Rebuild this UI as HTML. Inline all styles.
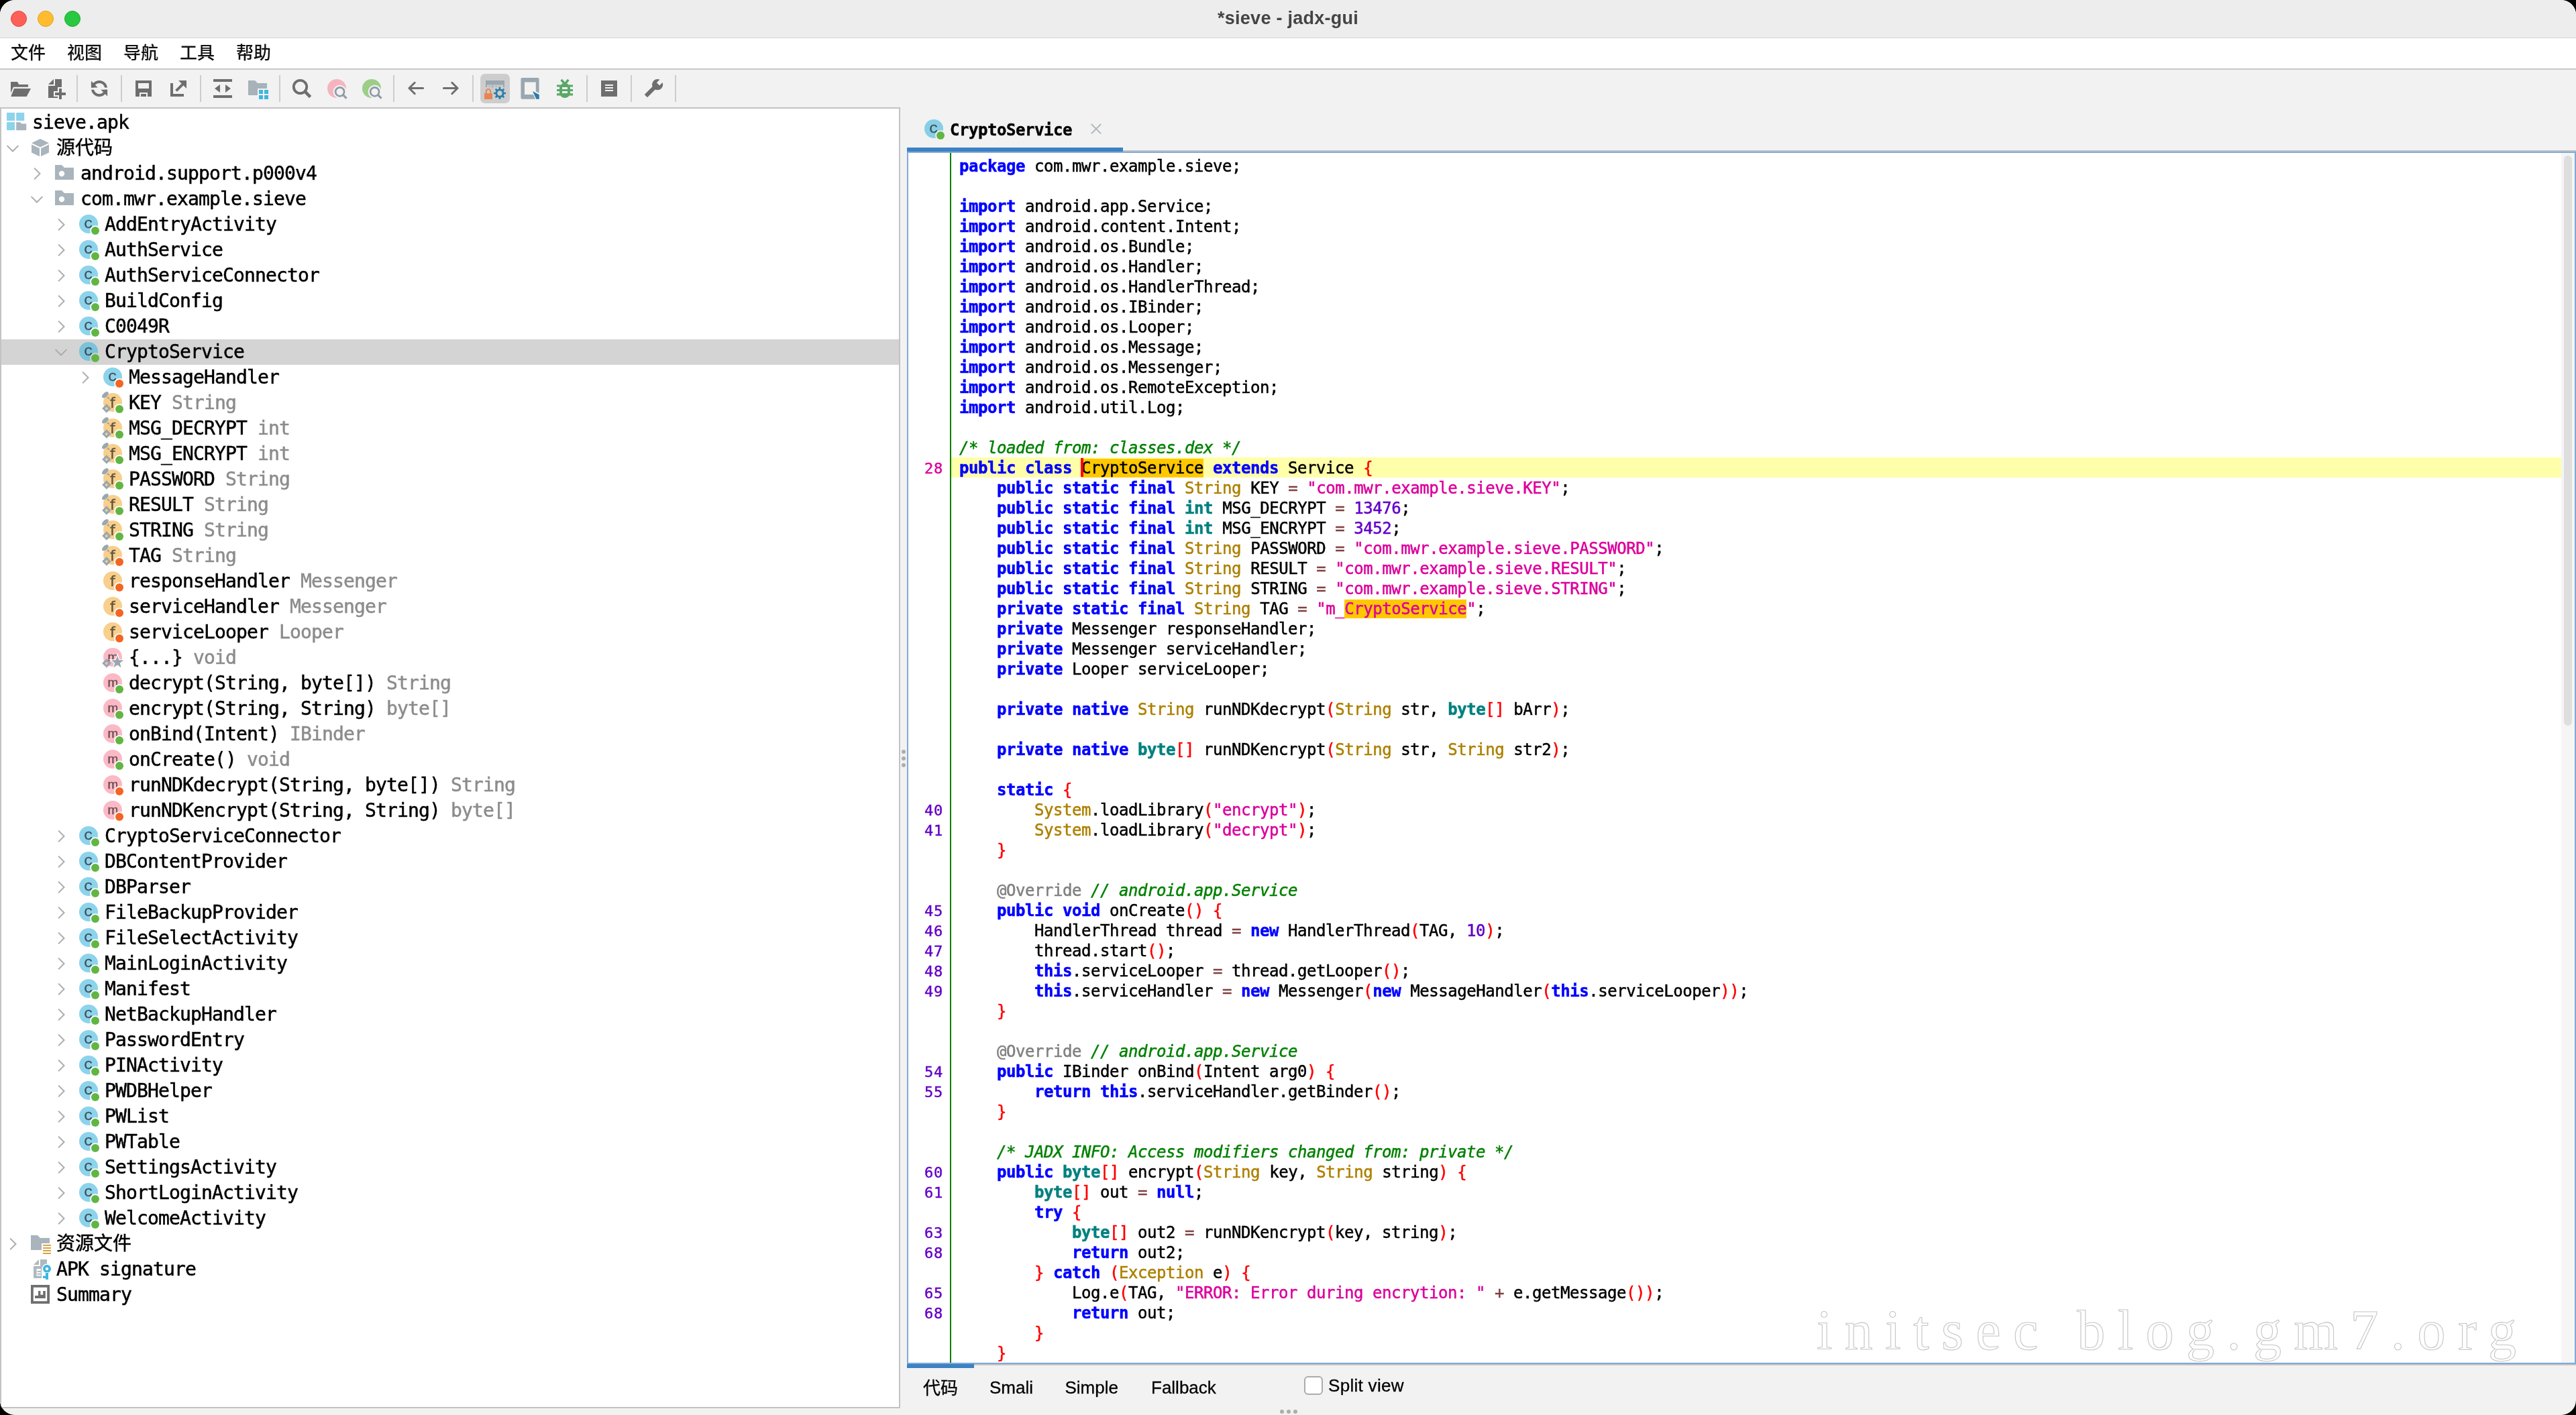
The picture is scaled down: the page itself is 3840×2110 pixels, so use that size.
<!DOCTYPE html>
<html lang="zh"><head><meta charset="utf-8"><title>*sieve - jadx-gui</title>
<style>
html,body{margin:0;padding:0;background:#000}
body{width:3840px;height:2110px;overflow:hidden;position:relative}
#win{position:absolute;left:0;top:0;width:3840px;height:2110px;background:#f2f2f2;border-radius:22px;overflow:hidden;will-change:transform}
#win div,#win pre{position:absolute;margin:0}
#title{left:0;top:0;width:3840px;height:56px;background:#ededed}
#titleline{left:0;top:55.5px;width:3840px;height:1.5px;background:#d2d2d2}
#ttext{left:0;top:0;width:3840px;height:56px;line-height:54px;text-align:center;font:bold 27px "Liberation Sans","Noto Sans CJK SC",sans-serif;line-height:55px;letter-spacing:.25px;color:#444}
.tl{top:16px;width:24px;height:24px;border-radius:50%;box-sizing:border-box}
#menu{left:0;top:57px;width:3840px;height:45px;background:#fff}
#menuline{left:0;top:102px;width:3840px;height:2px;background:#c8c8c8}
.mi{top:58px;height:44px;font:500 26px "Liberation Sans","Noto Sans CJK SC",sans-serif;line-height:43px;color:#111}
.sep{top:112px;width:2px;height:40px;background:#cdcdcd}
.tbsel{left:716px;top:110px;width:44px;height:44px;border-radius:7px;background:#cdcdcd}
#tree{left:0;top:160px;width:1342px;height:1940px;box-sizing:border-box;border:2px solid #c3c3c3;background:#fff}
.sel{left:2px;width:1338px;height:38px;background:#d4d4d4}
.tr{height:38px;font:28px "DejaVu Sans Mono","Liberation Mono","Noto Sans CJK SC",monospace;line-height:37px;letter-spacing:-0.857px;color:#000;white-space:pre;-webkit-text-stroke:.5px}
.tr.cj{font-size:28px;line-height:38px;letter-spacing:0}
.ty{color:#8c8c8c}
.dot{width:6px;height:6px;border-radius:50%;background:#adadad}
#tabicon{left:1376px;top:176px}
#tabtext{left:1416px;top:177px;height:34px;font:bold 24px "DejaVu Sans Mono","Liberation Mono","Noto Sans CJK SC",monospace;line-height:34px;letter-spacing:-0.449px;color:#000;white-space:pre;-webkit-text-stroke:.45px}
#tabul{left:1352px;top:220px;width:322px;height:6px;background:#3c81c4}
#tabline{left:1674px;top:224px;width:2166px;height:2px;background:#c4c4c4}
#editor{left:1352px;top:226px;width:2488px;height:1808px;box-sizing:border-box;border:2px solid #80aad6;background:#fff;overflow:hidden}
#hl{left:64px;top:454px;width:2400px;height:30px;background:#ffffaa}
#gline{left:62px;top:0;width:2px;height:1804px;background:#008000}
#gut{left:0;top:5.5px;width:52px;text-align:right;font:22px "DejaVu Sans Mono","Liberation Mono","Noto Sans CJK SC",monospace;line-height:30px;letter-spacing:0.755px;color:#6400c8;white-space:pre;-webkit-text-stroke:.45px}
#gut u{text-decoration:none;color:#dc009c}
#code{left:76px;top:5px;font:24px "DejaVu Sans Mono","Liberation Mono","Noto Sans CJK SC",monospace;line-height:30px;letter-spacing:-0.449px;color:#000;white-space:pre;tab-size:4;-webkit-text-stroke:.5px}
#code b{color:#0000ff}
#code b.d{color:#008080}
#code i{font-style:normal}
#code .f{color:#ad8000} #code .s{color:#dc009c} #code .n{color:#6400c8} #code .o{color:#804040} #code .p{color:#ff0000} #code .a{color:#808080}
#code em{color:#008000;font-style:italic}
#code mark{background:#ffc800;color:inherit;padding:0}
#caret{left:257px;top:455px;width:4px;height:28px;background:#ff0000}
#sbtrack{left:2464px;top:0;width:20px;height:1804px;background:#f5f5f5}
#sbthumb{left:2468px;top:4px;width:12px;height:850px;border-radius:6px;background:#dedede}
#wm{left:1354px;top:1709px;font:84px "Liberation Serif",serif;letter-spacing:18.5px;color:transparent;-webkit-text-stroke:1.1px #c6c6c6;white-space:pre;line-height:93px}
#btul{left:1352px;top:2034px;width:100px;height:6px;background:#3c81c4}
#btline{left:1452px;top:2034px;width:2388px;height:2px;background:#c4c4c4}
.bt{top:2046px;height:44px;font:26px "Liberation Sans","Noto Sans CJK SC",sans-serif;line-height:44px;color:#000;white-space:pre;-webkit-text-stroke:.3px}
#cb{left:1944px;top:2052px;width:28px;height:28px;box-sizing:border-box;border:2px solid #ababab;border-radius:6px;background:#fff}
</style></head>
<body>
<div id="win">
<div id="title"></div><div id="titleline"></div>
<div class="tl" style="left:16px;background:#fe5f57;border:1px solid #e2463f"></div>
<div class="tl" style="left:56px;background:#febc2e;border:1px solid #e0a028"></div>
<div class="tl" style="left:96px;background:#28c840;border:1px solid #1fab2f"></div>
<div id="ttext">*sieve - jadx-gui</div>
<div id="menu"></div><div id="menuline"></div>
<div class="mi" style="left:16px">文件</div><div class="mi" style="left:100px">视图</div><div class="mi" style="left:184px">导航</div><div class="mi" style="left:268px">工具</div><div class="mi" style="left:352px">帮助</div>
<div class="sep" style="left:114px"></div>
<div class="sep" style="left:180px"></div>
<div class="sep" style="left:298px"></div>
<div class="sep" style="left:416px"></div>
<div class="sep" style="left:586px"></div>
<div class="sep" style="left:704px"></div>
<div class="sep" style="left:874px"></div>
<div class="sep" style="left:940px"></div>
<div class="sep" style="left:1006px"></div>
<div class="tbsel"></div>
<svg style="position:absolute;left:14px;top:116px" width="32" height="32" viewBox="0 0 16 16" ><path d="M1,3 L6,3 L7.1,5 L14,5 L14,6.9 L3,6.9 L1,11.3 Z M3.5,8 L16,8 L12.85,14 L1.1,14 Z" fill="#6e6e6e"/></svg>
<svg style="position:absolute;left:66px;top:116px" width="32" height="32" viewBox="0 0 16 16" ><path d="M7,1 L3,5 L7,5 Z" fill="#6e6e6e"/><path d="M10,15 L3,15 L3,6 L8,6 L8,1 L13,1 L13,7 L10,7 L10,10 L7,10 L7,14 L10,14 Z" fill="#6e6e6e"/><path d="M11,8 h2 v3 h3 v2 h-3 v3 h-2 v-3 h-3 v-2 h3 z" fill="#6e6e6e"/></svg>
<svg style="position:absolute;left:132px;top:116px" width="32" height="32" viewBox="0 0 16 16" ><circle cx="8" cy="8.05" r="5.05" fill="none" stroke="#6e6e6e" stroke-width="1.95"/><rect x="0" y="7.3" width="16" height="1.55" fill="#f2f2f2"/><path d="M1.95,2.4 L1.95,7.3 L6.85,7.3 Z M14.05,13.7 L14.05,8.85 L9.15,8.85 Z" fill="#6e6e6e"/></svg>
<svg style="position:absolute;left:198px;top:116px" width="32" height="32" viewBox="0 0 16 16" ><path d="M2,2 H14 V14 H2 Z M4,4 V8 H12 V4 Z M5,11 V14 H11 V11 Z" fill="#6e6e6e" fill-rule="evenodd"/><rect x="6" y="12" width="4" height="2" fill="#6e6e6e"/></svg>
<svg style="position:absolute;left:250px;top:116px" width="32" height="32" viewBox="0 0 16 16" ><path d="M2,4 H4 V12 H12 V14 H2 Z" fill="#6e6e6e"/><path d="M8,2 H14 V8 Z" fill="#6e6e6e"/><path d="M6.1,9 L7,9.9 L12.4,4.5 L11.5,3.6 Z" fill="#6e6e6e" stroke="#6e6e6e" stroke-width=".7"/></svg>
<svg style="position:absolute;left:316px;top:116px" width="32" height="32" viewBox="0 0 16 16" ><path d="M1,1 H15 V3 H1 Z M1,13 H15 V15 H1 Z M2,8 L6,5 V11 Z M14,8 L10,5 V11 Z" fill="#6e6e6e"/></svg>
<svg style="position:absolute;left:368px;top:116px" width="32" height="32" viewBox="0 0 16 16" ><path d="M1,2 L6,2 L8,4 L15,4 L15,8 L8,8 L8,13 L1,13 Z" fill="#9aa7b0" fill-opacity=".85"/><path d="M9,9h3v3h-3z M13,9h3v3h-3z M9,13h3v3h-3z M13,13h3v3h-3z" fill="#40b6e0"/></svg>
<svg style="position:absolute;left:434px;top:116px" width="32" height="32" viewBox="0 0 16 16" ><circle cx="6.75" cy="6.75" r="4.85" fill="none" stroke="#6e6e6e" stroke-width="1.9"/><path d="M10.1,10.1 L14.3,14.3" stroke="#6e6e6e" stroke-width="2.3" fill="none"/></svg>
<svg style="position:absolute;left:486px;top:116px" width="32" height="32" viewBox="0 0 16 16" ><circle cx="8" cy="8" r="7" fill="#f98b9e" fill-opacity=".6"/><circle cx="10.3" cy="10.4" r="5" fill="#f2f2f2"/><path d="M12.4,12.5 L15.3,15.3" stroke="#f2f2f2" stroke-width="3.4" fill="none"/><circle cx="10.3" cy="10.4" r="3.25" fill="none" stroke="#8d9ba6" stroke-width="1.35"/><path d="M12.6,12.7 L15.3,15.3" stroke="#8d9ba6" stroke-width="1.5" fill="none"/></svg>
<svg style="position:absolute;left:538px;top:116px" width="32" height="32" viewBox="0 0 16 16" ><circle cx="8" cy="8" r="7" fill="#62b543" fill-opacity=".6"/><circle cx="10.3" cy="10.4" r="5" fill="#f2f2f2"/><path d="M12.4,12.5 L15.3,15.3" stroke="#f2f2f2" stroke-width="3.4" fill="none"/><circle cx="10.3" cy="10.4" r="3.25" fill="none" stroke="#8d9ba6" stroke-width="1.35"/><path d="M12.6,12.7 L15.3,15.3" stroke="#8d9ba6" stroke-width="1.5" fill="none"/></svg>
<svg style="position:absolute;left:604px;top:116px" width="32" height="32" viewBox="0 0 16 16" ><path d="M7.1,3.65 L2.95,7.75 L7.1,11.85 M3.2,7.75 H13.3" fill="none" stroke="#6e6e6e" stroke-width="1.5" stroke-linecap="round" stroke-linejoin="round"/></svg>
<svg style="position:absolute;left:656px;top:116px" width="32" height="32" viewBox="0 0 16 16" ><path d="M8.9,3.65 L13.05,7.75 L8.9,11.85 M12.8,7.75 H2.7" fill="none" stroke="#6e6e6e" stroke-width="1.5" stroke-linecap="round" stroke-linejoin="round"/></svg>
<svg style="position:absolute;left:722px;top:116px" width="32" height="32" viewBox="0 0 16 16" ><path d="M1,2 H15 V7 H14 V5.3 H2 V7 H1 Z" fill="#9aa7b0"/><path d="M3,6h1.5v.8h-1.5z M5.5,6h1.5v.8h-1.5z M8,6h1.5v.8h-1.5z M10.5,6h1.5v.8h-1.5z M5.6,5.3h.9v2.6h-.9z" fill="#9aa7b0" fill-opacity=".7"/><rect x="0" y="11.6" width="6" height="4.4" fill="#e8844f"/><path d="M1.4,11.8 V10.2 A1.6,1.7 0 0 1 4.6,10.2 V11.8" fill="none" stroke="#e8844f" stroke-width="1"/><circle cx="11.5" cy="11.5" r="2.55" fill="none" stroke="#2b7cab" stroke-width="1.45"/><path d="M14.50,11.50 L16.00,11.50" stroke="#2b7cab" stroke-width="1.3"/><path d="M13.62,13.62 L14.68,14.68" stroke="#2b7cab" stroke-width="1.3"/><path d="M11.50,14.50 L11.50,16.00" stroke="#2b7cab" stroke-width="1.3"/><path d="M9.38,13.62 L8.32,14.68" stroke="#2b7cab" stroke-width="1.3"/><path d="M8.50,11.50 L7.00,11.50" stroke="#2b7cab" stroke-width="1.3"/><path d="M9.38,9.38 L8.32,8.32" stroke="#2b7cab" stroke-width="1.3"/><path d="M11.50,8.50 L11.50,7.00" stroke="#2b7cab" stroke-width="1.3"/><path d="M13.62,9.38 L14.68,8.32" stroke="#2b7cab" stroke-width="1.3"/></svg>
<svg style="position:absolute;left:774px;top:116px" width="32" height="32" viewBox="0 0 16 16" ><path d="M2.2,0 H13.8 A1,1 0 0 1 14.8,1 V15.9 H2.2 A1,1 0 0 1 1.2,14.9 V1 A1,1 0 0 1 2.2,0 Z M4,3.3 V12.45 H12.4 V3.3 Z" fill="#9aa7b0" fill-rule="evenodd"/><path d="M8.6,8.2 L16,12 V16 H12 Z" fill="#f2f2f2"/><path d="M10,10 L14.9,12.6 V15.9 H12.7 Z" fill="#2b7cab"/></svg>
<svg style="position:absolute;left:826px;top:116px" width="32" height="32" viewBox="0 0 16 16" ><path d="M4,8 A4,4 0 0 1 12,8 V11 A4,4 0 0 1 4,11 Z M6,7.05 V8.5 H10 V7.05 Z M6,10 V11.55 H10 V10 Z" fill="#59a869" fill-rule="evenodd"/><path d="M2,5.2h3v1.6h-3z M2,8.5h2.5v1.5h-2.5z M2,11.65h3v1.65h-3z M11,5.2h3v1.6h-3z M11.5,8.5h2.5v1.5h-2.5z M11,11.65h3v1.65h-3z" fill="#59a869"/><path d="M5.35,1.45 L7.7,4.3 M10.65,1.45 L8.3,4.3" stroke="#59a869" stroke-width="1.75" fill="none"/></svg>
<svg style="position:absolute;left:892px;top:116px" width="32" height="32" viewBox="0 0 16 16" ><path d="M2,2 H14 V14 H2 Z M5,5 V6 H11 V5 Z M5,7 V8 H11 V7 Z M5,9 V10 H11 V9 Z" fill="#6e6e6e" fill-rule="evenodd"/></svg>
<svg style="position:absolute;left:958px;top:116px" width="32" height="32" viewBox="0 0 16 16" ><path d="M2.45,13.55 L9.2,6.8" stroke="#6e6e6e" stroke-width="3" fill="none"/><circle cx="11.05" cy="5.1" r="4.05" fill="#6e6e6e"/><path d="M11.5,4.65 L16,0.15" stroke="#f2f2f2" stroke-width="3" fill="none"/></svg>
<div id="tree"></div>
<svg style="position:absolute;left:8px;top:166px" width="32" height="32" viewBox="0 0 16 16" ><rect x="1" y="1" width="6" height="6" fill="#40b6e0" fill-opacity=".6"/><rect x="8.1" y="1" width="6" height="6" fill="#40b6e0" fill-opacity=".6"/><rect x="1" y="8.1" width="6" height="6" fill="#40b6e0" fill-opacity=".6"/><path d="M8.1,8.1 L11,8.1 L12,9.3 L15.6,9.3 L15.6,14.1 L8.1,14.1 Z" fill="#9aa7b0" fill-opacity=".85"/></svg>
<div class="tr" style="left:48px;top:164px">sieve.apk</div>
<svg style="position:absolute;left:7.399999999999999px;top:209.3px" width="24" height="24" viewBox="-12 -12 24 24"><path d="M-8.4,-3.9 L0,4.5 L8.4,-3.9" fill="none" stroke="#acacac" stroke-width="2"/></svg>
<svg style="position:absolute;left:44px;top:204px" width="32" height="32" viewBox="0 0 16 16" ><path d="M8,1.5 L14.5,4.6 L8,7.7 L1.5,4.6 Z" fill="#9aa7b0" fill-opacity=".85"/><path d="M1.5,5.7 L7.5,8.6 L7.5,14.6 L1.5,11.7 Z" fill="#9aa7b0" fill-opacity=".85"/><path d="M14.5,5.7 L8.5,8.6 L8.5,14.6 L14.5,11.7 Z" fill="#9aa7b0" fill-opacity=".85"/></svg>
<div class="tr cj" style="left:84px;top:202px">源代码</div>
<svg style="position:absolute;left:43.4px;top:247.3px" width="24" height="24" viewBox="-12 -12 24 24"><path d="M-3.9,-8.4 L4.5,0 L-3.9,8.4" fill="none" stroke="#acacac" stroke-width="2"/></svg>
<svg style="position:absolute;left:80px;top:242px" width="32" height="32" viewBox="0 0 16 16" ><path d="M1,2 L6,2 L8,4 L15,4 L15,13 L1,13 Z M6,6.4 A2.1,2.1 0 1 0 6,10.6 A2.1,2.1 0 1 0 6,6.4 Z" fill="#9aa7b0" fill-opacity=".85" fill-rule="evenodd"/></svg>
<div class="tr" style="left:120px;top:240px">android.support.p000v4</div>
<svg style="position:absolute;left:43.4px;top:285.3px" width="24" height="24" viewBox="-12 -12 24 24"><path d="M-8.4,-3.9 L0,4.5 L8.4,-3.9" fill="none" stroke="#acacac" stroke-width="2"/></svg>
<svg style="position:absolute;left:80px;top:280px" width="32" height="32" viewBox="0 0 16 16" ><path d="M1,2 L6,2 L8,4 L15,4 L15,13 L1,13 Z M6,6.4 A2.1,2.1 0 1 0 6,10.6 A2.1,2.1 0 1 0 6,6.4 Z" fill="#9aa7b0" fill-opacity=".85" fill-rule="evenodd"/></svg>
<div class="tr" style="left:120px;top:278px">com.mwr.example.sieve</div>
<svg style="position:absolute;left:79.4px;top:323.3px" width="24" height="24" viewBox="-12 -12 24 24"><path d="M-3.9,-8.4 L4.5,0 L-3.9,8.4" fill="none" stroke="#acacac" stroke-width="2"/></svg>
<svg style="position:absolute;left:116px;top:318px" width="32" height="32" viewBox="0 0 16 16" ><circle cx="8" cy="8" r="7" fill="#40b6e0" fill-opacity=".6"/><g opacity=".75"><text x="7.8" y="11" font-family="Liberation Sans,sans-serif" font-size="8.1" text-anchor="middle" fill="#231f20" stroke="#231f20" stroke-width=".3">C</text></g><circle cx="13" cy="13" r="3.9" fill="#fff"/><circle cx="13" cy="13" r="3" fill="#62b543"/></svg>
<div class="tr" style="left:156px;top:316px">AddEntryActivity</div>
<svg style="position:absolute;left:79.4px;top:361.3px" width="24" height="24" viewBox="-12 -12 24 24"><path d="M-3.9,-8.4 L4.5,0 L-3.9,8.4" fill="none" stroke="#acacac" stroke-width="2"/></svg>
<svg style="position:absolute;left:116px;top:356px" width="32" height="32" viewBox="0 0 16 16" ><circle cx="8" cy="8" r="7" fill="#40b6e0" fill-opacity=".6"/><g opacity=".75"><text x="7.8" y="11" font-family="Liberation Sans,sans-serif" font-size="8.1" text-anchor="middle" fill="#231f20" stroke="#231f20" stroke-width=".3">C</text></g><circle cx="13" cy="13" r="3.9" fill="#fff"/><circle cx="13" cy="13" r="3" fill="#62b543"/></svg>
<div class="tr" style="left:156px;top:354px">AuthService</div>
<svg style="position:absolute;left:79.4px;top:399.3px" width="24" height="24" viewBox="-12 -12 24 24"><path d="M-3.9,-8.4 L4.5,0 L-3.9,8.4" fill="none" stroke="#acacac" stroke-width="2"/></svg>
<svg style="position:absolute;left:116px;top:394px" width="32" height="32" viewBox="0 0 16 16" ><circle cx="8" cy="8" r="7" fill="#40b6e0" fill-opacity=".6"/><g opacity=".75"><text x="7.8" y="11" font-family="Liberation Sans,sans-serif" font-size="8.1" text-anchor="middle" fill="#231f20" stroke="#231f20" stroke-width=".3">C</text></g><circle cx="13" cy="13" r="3.9" fill="#fff"/><circle cx="13" cy="13" r="3" fill="#62b543"/></svg>
<div class="tr" style="left:156px;top:392px">AuthServiceConnector</div>
<svg style="position:absolute;left:79.4px;top:437.3px" width="24" height="24" viewBox="-12 -12 24 24"><path d="M-3.9,-8.4 L4.5,0 L-3.9,8.4" fill="none" stroke="#acacac" stroke-width="2"/></svg>
<svg style="position:absolute;left:116px;top:432px" width="32" height="32" viewBox="0 0 16 16" ><circle cx="8" cy="8" r="7" fill="#40b6e0" fill-opacity=".6"/><g opacity=".75"><text x="7.8" y="11" font-family="Liberation Sans,sans-serif" font-size="8.1" text-anchor="middle" fill="#231f20" stroke="#231f20" stroke-width=".3">C</text></g><circle cx="13" cy="13" r="3.9" fill="#fff"/><circle cx="13" cy="13" r="3" fill="#62b543"/></svg>
<div class="tr" style="left:156px;top:430px">BuildConfig</div>
<svg style="position:absolute;left:79.4px;top:475.3px" width="24" height="24" viewBox="-12 -12 24 24"><path d="M-3.9,-8.4 L4.5,0 L-3.9,8.4" fill="none" stroke="#acacac" stroke-width="2"/></svg>
<svg style="position:absolute;left:116px;top:470px" width="32" height="32" viewBox="0 0 16 16" ><circle cx="8" cy="8" r="7" fill="#40b6e0" fill-opacity=".6"/><g opacity=".75"><text x="7.8" y="11" font-family="Liberation Sans,sans-serif" font-size="8.1" text-anchor="middle" fill="#231f20" stroke="#231f20" stroke-width=".3">C</text></g><circle cx="13" cy="13" r="3.9" fill="#fff"/><circle cx="13" cy="13" r="3" fill="#62b543"/></svg>
<div class="tr" style="left:156px;top:468px">C0049R</div>
<div class="sel" style="top:506px"></div>
<svg style="position:absolute;left:79.4px;top:513.3px" width="24" height="24" viewBox="-12 -12 24 24"><path d="M-8.4,-3.9 L0,4.5 L8.4,-3.9" fill="none" stroke="#acacac" stroke-width="2"/></svg>
<svg style="position:absolute;left:116px;top:508px" width="32" height="32" viewBox="0 0 16 16" ><circle cx="8" cy="8" r="7" fill="#40b6e0" fill-opacity=".6"/><g opacity=".75"><text x="7.8" y="11" font-family="Liberation Sans,sans-serif" font-size="8.1" text-anchor="middle" fill="#231f20" stroke="#231f20" stroke-width=".3">C</text></g><circle cx="13" cy="13" r="3.9" fill="#d4d4d4"/><circle cx="13" cy="13" r="3" fill="#62b543"/></svg>
<div class="tr" style="left:156px;top:506px">CryptoService</div>
<svg style="position:absolute;left:115.4px;top:551.3px" width="24" height="24" viewBox="-12 -12 24 24"><path d="M-3.9,-8.4 L4.5,0 L-3.9,8.4" fill="none" stroke="#acacac" stroke-width="2"/></svg>
<svg style="position:absolute;left:152px;top:546px" width="32" height="32" viewBox="0 0 16 16" ><circle cx="8" cy="8" r="7" fill="#40b6e0" fill-opacity=".6"/><g opacity=".75"><text x="7.8" y="11" font-family="Liberation Sans,sans-serif" font-size="8.1" text-anchor="middle" fill="#231f20" stroke="#231f20" stroke-width=".3">C</text></g><circle cx="13" cy="13" r="3.9" fill="#fff"/><circle cx="13" cy="13" r="3" fill="#f26522"/></svg>
<div class="tr" style="left:192px;top:544px">MessageHandler</div>
<svg style="position:absolute;left:152px;top:584px" width="32" height="32" viewBox="0 0 16 16" ><circle cx="8" cy="8" r="7" fill="#f4af3d" fill-opacity=".6"/><g opacity="0.7"><text x="7.95" y="12.15" font-family="DejaVu Sans,sans-serif" font-size="10.8" text-anchor="middle" fill="#231f20" stroke="#231f20" stroke-width="0.22">f</text></g><ellipse cx="2.45" cy="2.4" rx="2.95" ry="1.6" transform="rotate(-42 2.45 2.4)" fill="#9aa7b0"/><path d="M3.5,4.75 L4.7,3.5 L6,5.9 Z" fill="#9aa7b0"/><path d="M3.45,9.1 L6.85,12.5 L3.45,15.9 L0.05,12.5 Z M3.45,11.35 L2.3,12.5 L3.45,13.65 L4.6,12.5 Z" fill="#9aa7b0" fill-rule="evenodd"/><circle cx="13" cy="13" r="3.9" fill="#fff"/><circle cx="13" cy="13" r="3" fill="#62b543"/></svg>
<div class="tr" style="left:192px;top:582px">KEY <span class="ty">String</span></div>
<svg style="position:absolute;left:152px;top:622px" width="32" height="32" viewBox="0 0 16 16" ><circle cx="8" cy="8" r="7" fill="#f4af3d" fill-opacity=".6"/><g opacity="0.7"><text x="7.95" y="12.15" font-family="DejaVu Sans,sans-serif" font-size="10.8" text-anchor="middle" fill="#231f20" stroke="#231f20" stroke-width="0.22">f</text></g><ellipse cx="2.45" cy="2.4" rx="2.95" ry="1.6" transform="rotate(-42 2.45 2.4)" fill="#9aa7b0"/><path d="M3.5,4.75 L4.7,3.5 L6,5.9 Z" fill="#9aa7b0"/><path d="M3.45,9.1 L6.85,12.5 L3.45,15.9 L0.05,12.5 Z M3.45,11.35 L2.3,12.5 L3.45,13.65 L4.6,12.5 Z" fill="#9aa7b0" fill-rule="evenodd"/><circle cx="13" cy="13" r="3.9" fill="#fff"/><circle cx="13" cy="13" r="3" fill="#62b543"/></svg>
<div class="tr" style="left:192px;top:620px">MSG_DECRYPT <span class="ty">int</span></div>
<svg style="position:absolute;left:152px;top:660px" width="32" height="32" viewBox="0 0 16 16" ><circle cx="8" cy="8" r="7" fill="#f4af3d" fill-opacity=".6"/><g opacity="0.7"><text x="7.95" y="12.15" font-family="DejaVu Sans,sans-serif" font-size="10.8" text-anchor="middle" fill="#231f20" stroke="#231f20" stroke-width="0.22">f</text></g><ellipse cx="2.45" cy="2.4" rx="2.95" ry="1.6" transform="rotate(-42 2.45 2.4)" fill="#9aa7b0"/><path d="M3.5,4.75 L4.7,3.5 L6,5.9 Z" fill="#9aa7b0"/><path d="M3.45,9.1 L6.85,12.5 L3.45,15.9 L0.05,12.5 Z M3.45,11.35 L2.3,12.5 L3.45,13.65 L4.6,12.5 Z" fill="#9aa7b0" fill-rule="evenodd"/><circle cx="13" cy="13" r="3.9" fill="#fff"/><circle cx="13" cy="13" r="3" fill="#62b543"/></svg>
<div class="tr" style="left:192px;top:658px">MSG_ENCRYPT <span class="ty">int</span></div>
<svg style="position:absolute;left:152px;top:698px" width="32" height="32" viewBox="0 0 16 16" ><circle cx="8" cy="8" r="7" fill="#f4af3d" fill-opacity=".6"/><g opacity="0.7"><text x="7.95" y="12.15" font-family="DejaVu Sans,sans-serif" font-size="10.8" text-anchor="middle" fill="#231f20" stroke="#231f20" stroke-width="0.22">f</text></g><ellipse cx="2.45" cy="2.4" rx="2.95" ry="1.6" transform="rotate(-42 2.45 2.4)" fill="#9aa7b0"/><path d="M3.5,4.75 L4.7,3.5 L6,5.9 Z" fill="#9aa7b0"/><path d="M3.45,9.1 L6.85,12.5 L3.45,15.9 L0.05,12.5 Z M3.45,11.35 L2.3,12.5 L3.45,13.65 L4.6,12.5 Z" fill="#9aa7b0" fill-rule="evenodd"/><circle cx="13" cy="13" r="3.9" fill="#fff"/><circle cx="13" cy="13" r="3" fill="#62b543"/></svg>
<div class="tr" style="left:192px;top:696px">PASSWORD <span class="ty">String</span></div>
<svg style="position:absolute;left:152px;top:736px" width="32" height="32" viewBox="0 0 16 16" ><circle cx="8" cy="8" r="7" fill="#f4af3d" fill-opacity=".6"/><g opacity="0.7"><text x="7.95" y="12.15" font-family="DejaVu Sans,sans-serif" font-size="10.8" text-anchor="middle" fill="#231f20" stroke="#231f20" stroke-width="0.22">f</text></g><ellipse cx="2.45" cy="2.4" rx="2.95" ry="1.6" transform="rotate(-42 2.45 2.4)" fill="#9aa7b0"/><path d="M3.5,4.75 L4.7,3.5 L6,5.9 Z" fill="#9aa7b0"/><path d="M3.45,9.1 L6.85,12.5 L3.45,15.9 L0.05,12.5 Z M3.45,11.35 L2.3,12.5 L3.45,13.65 L4.6,12.5 Z" fill="#9aa7b0" fill-rule="evenodd"/><circle cx="13" cy="13" r="3.9" fill="#fff"/><circle cx="13" cy="13" r="3" fill="#62b543"/></svg>
<div class="tr" style="left:192px;top:734px">RESULT <span class="ty">String</span></div>
<svg style="position:absolute;left:152px;top:774px" width="32" height="32" viewBox="0 0 16 16" ><circle cx="8" cy="8" r="7" fill="#f4af3d" fill-opacity=".6"/><g opacity="0.7"><text x="7.95" y="12.15" font-family="DejaVu Sans,sans-serif" font-size="10.8" text-anchor="middle" fill="#231f20" stroke="#231f20" stroke-width="0.22">f</text></g><ellipse cx="2.45" cy="2.4" rx="2.95" ry="1.6" transform="rotate(-42 2.45 2.4)" fill="#9aa7b0"/><path d="M3.5,4.75 L4.7,3.5 L6,5.9 Z" fill="#9aa7b0"/><path d="M3.45,9.1 L6.85,12.5 L3.45,15.9 L0.05,12.5 Z M3.45,11.35 L2.3,12.5 L3.45,13.65 L4.6,12.5 Z" fill="#9aa7b0" fill-rule="evenodd"/><circle cx="13" cy="13" r="3.9" fill="#fff"/><circle cx="13" cy="13" r="3" fill="#62b543"/></svg>
<div class="tr" style="left:192px;top:772px">STRING <span class="ty">String</span></div>
<svg style="position:absolute;left:152px;top:812px" width="32" height="32" viewBox="0 0 16 16" ><circle cx="8" cy="8" r="7" fill="#f4af3d" fill-opacity=".6"/><g opacity="0.7"><text x="7.95" y="12.15" font-family="DejaVu Sans,sans-serif" font-size="10.8" text-anchor="middle" fill="#231f20" stroke="#231f20" stroke-width="0.22">f</text></g><ellipse cx="2.45" cy="2.4" rx="2.95" ry="1.6" transform="rotate(-42 2.45 2.4)" fill="#9aa7b0"/><path d="M3.5,4.75 L4.7,3.5 L6,5.9 Z" fill="#9aa7b0"/><path d="M3.45,9.1 L6.85,12.5 L3.45,15.9 L0.05,12.5 Z M3.45,11.35 L2.3,12.5 L3.45,13.65 L4.6,12.5 Z" fill="#9aa7b0" fill-rule="evenodd"/><circle cx="13" cy="13" r="3.9" fill="#fff"/><circle cx="13" cy="13" r="3" fill="#f26522"/></svg>
<div class="tr" style="left:192px;top:810px">TAG <span class="ty">String</span></div>
<svg style="position:absolute;left:152px;top:850px" width="32" height="32" viewBox="0 0 16 16" ><circle cx="8" cy="8" r="7" fill="#f4af3d" fill-opacity=".6"/><g opacity="0.7"><text x="7.95" y="12.15" font-family="DejaVu Sans,sans-serif" font-size="10.8" text-anchor="middle" fill="#231f20" stroke="#231f20" stroke-width="0.22">f</text></g><circle cx="13" cy="13" r="3.9" fill="#fff"/><circle cx="13" cy="13" r="3" fill="#f26522"/></svg>
<div class="tr" style="left:192px;top:848px">responseHandler <span class="ty">Messenger</span></div>
<svg style="position:absolute;left:152px;top:888px" width="32" height="32" viewBox="0 0 16 16" ><circle cx="8" cy="8" r="7" fill="#f4af3d" fill-opacity=".6"/><g opacity="0.7"><text x="7.95" y="12.15" font-family="DejaVu Sans,sans-serif" font-size="10.8" text-anchor="middle" fill="#231f20" stroke="#231f20" stroke-width="0.22">f</text></g><circle cx="13" cy="13" r="3.9" fill="#fff"/><circle cx="13" cy="13" r="3" fill="#f26522"/></svg>
<div class="tr" style="left:192px;top:886px">serviceHandler <span class="ty">Messenger</span></div>
<svg style="position:absolute;left:152px;top:926px" width="32" height="32" viewBox="0 0 16 16" ><circle cx="8" cy="8" r="7" fill="#f4af3d" fill-opacity=".6"/><g opacity="0.7"><text x="7.95" y="12.15" font-family="DejaVu Sans,sans-serif" font-size="10.8" text-anchor="middle" fill="#231f20" stroke="#231f20" stroke-width="0.22">f</text></g><circle cx="13" cy="13" r="3.9" fill="#fff"/><circle cx="13" cy="13" r="3" fill="#f26522"/></svg>
<div class="tr" style="left:192px;top:924px">serviceLooper <span class="ty">Looper</span></div>
<svg style="position:absolute;left:152px;top:964px" width="32" height="32" viewBox="0 0 16 16" ><circle cx="8" cy="8" r="7" fill="#f98b9e" fill-opacity=".6"/><g opacity="0.7"><text x="8.2" y="10.95" font-family="Liberation Sans,sans-serif" font-size="9.4" text-anchor="middle" fill="#231f20" stroke="#231f20" stroke-width="0.2">m</text></g><path d="M3.45,9.1 L6.85,12.5 L3.45,15.9 L0.05,12.5 Z M3.45,11.35 L2.3,12.5 L3.45,13.65 L4.6,12.5 Z" fill="#9aa7b0" fill-rule="evenodd"/><path d="M11.50,6.85 L12.65,10.17 L16.16,10.24 L13.35,12.35 L14.38,15.71 L11.50,13.70 L8.62,15.71 L9.65,12.35 L6.84,10.24 L10.35,10.17 Z" fill="#fff" stroke="#fff" stroke-width="1.3" stroke-linejoin="miter"/><path d="M11.50,6.85 L12.65,10.17 L16.16,10.24 L13.35,12.35 L14.38,15.71 L11.50,13.70 L8.62,15.71 L9.65,12.35 L6.84,10.24 L10.35,10.17 Z" fill="#9aa7b0"/></svg>
<div class="tr" style="left:192px;top:962px">{...} <span class="ty">void</span></div>
<svg style="position:absolute;left:152px;top:1002px" width="32" height="32" viewBox="0 0 16 16" ><circle cx="8" cy="8" r="7" fill="#f98b9e" fill-opacity=".6"/><g opacity="0.7"><text x="8.2" y="10.95" font-family="Liberation Sans,sans-serif" font-size="9.4" text-anchor="middle" fill="#231f20" stroke="#231f20" stroke-width="0.2">m</text></g><circle cx="13" cy="13" r="3.9" fill="#fff"/><circle cx="13" cy="13" r="3" fill="#62b543"/></svg>
<div class="tr" style="left:192px;top:1000px">decrypt(String, byte[]) <span class="ty">String</span></div>
<svg style="position:absolute;left:152px;top:1040px" width="32" height="32" viewBox="0 0 16 16" ><circle cx="8" cy="8" r="7" fill="#f98b9e" fill-opacity=".6"/><g opacity="0.7"><text x="8.2" y="10.95" font-family="Liberation Sans,sans-serif" font-size="9.4" text-anchor="middle" fill="#231f20" stroke="#231f20" stroke-width="0.2">m</text></g><circle cx="13" cy="13" r="3.9" fill="#fff"/><circle cx="13" cy="13" r="3" fill="#62b543"/></svg>
<div class="tr" style="left:192px;top:1038px">encrypt(String, String) <span class="ty">byte[]</span></div>
<svg style="position:absolute;left:152px;top:1078px" width="32" height="32" viewBox="0 0 16 16" ><circle cx="8" cy="8" r="7" fill="#f98b9e" fill-opacity=".6"/><g opacity="0.7"><text x="8.2" y="10.95" font-family="Liberation Sans,sans-serif" font-size="9.4" text-anchor="middle" fill="#231f20" stroke="#231f20" stroke-width="0.2">m</text></g><circle cx="13" cy="13" r="3.9" fill="#fff"/><circle cx="13" cy="13" r="3" fill="#62b543"/></svg>
<div class="tr" style="left:192px;top:1076px">onBind(Intent) <span class="ty">IBinder</span></div>
<svg style="position:absolute;left:152px;top:1116px" width="32" height="32" viewBox="0 0 16 16" ><circle cx="8" cy="8" r="7" fill="#f98b9e" fill-opacity=".6"/><g opacity="0.7"><text x="8.2" y="10.95" font-family="Liberation Sans,sans-serif" font-size="9.4" text-anchor="middle" fill="#231f20" stroke="#231f20" stroke-width="0.2">m</text></g><circle cx="13" cy="13" r="3.9" fill="#fff"/><circle cx="13" cy="13" r="3" fill="#62b543"/></svg>
<div class="tr" style="left:192px;top:1114px">onCreate() <span class="ty">void</span></div>
<svg style="position:absolute;left:152px;top:1154px" width="32" height="32" viewBox="0 0 16 16" ><circle cx="8" cy="8" r="7" fill="#f98b9e" fill-opacity=".6"/><g opacity="0.7"><text x="8.2" y="10.95" font-family="Liberation Sans,sans-serif" font-size="9.4" text-anchor="middle" fill="#231f20" stroke="#231f20" stroke-width="0.2">m</text></g><circle cx="13" cy="13" r="3.9" fill="#fff"/><circle cx="13" cy="13" r="3" fill="#f26522"/></svg>
<div class="tr" style="left:192px;top:1152px">runNDKdecrypt(String, byte[]) <span class="ty">String</span></div>
<svg style="position:absolute;left:152px;top:1192px" width="32" height="32" viewBox="0 0 16 16" ><circle cx="8" cy="8" r="7" fill="#f98b9e" fill-opacity=".6"/><g opacity="0.7"><text x="8.2" y="10.95" font-family="Liberation Sans,sans-serif" font-size="9.4" text-anchor="middle" fill="#231f20" stroke="#231f20" stroke-width="0.2">m</text></g><circle cx="13" cy="13" r="3.9" fill="#fff"/><circle cx="13" cy="13" r="3" fill="#f26522"/></svg>
<div class="tr" style="left:192px;top:1190px">runNDKencrypt(String, String) <span class="ty">byte[]</span></div>
<svg style="position:absolute;left:79.4px;top:1235.3px" width="24" height="24" viewBox="-12 -12 24 24"><path d="M-3.9,-8.4 L4.5,0 L-3.9,8.4" fill="none" stroke="#acacac" stroke-width="2"/></svg>
<svg style="position:absolute;left:116px;top:1230px" width="32" height="32" viewBox="0 0 16 16" ><circle cx="8" cy="8" r="7" fill="#40b6e0" fill-opacity=".6"/><g opacity=".75"><text x="7.8" y="11" font-family="Liberation Sans,sans-serif" font-size="8.1" text-anchor="middle" fill="#231f20" stroke="#231f20" stroke-width=".3">C</text></g><circle cx="13" cy="13" r="3.9" fill="#fff"/><circle cx="13" cy="13" r="3" fill="#62b543"/></svg>
<div class="tr" style="left:156px;top:1228px">CryptoServiceConnector</div>
<svg style="position:absolute;left:79.4px;top:1273.3px" width="24" height="24" viewBox="-12 -12 24 24"><path d="M-3.9,-8.4 L4.5,0 L-3.9,8.4" fill="none" stroke="#acacac" stroke-width="2"/></svg>
<svg style="position:absolute;left:116px;top:1268px" width="32" height="32" viewBox="0 0 16 16" ><circle cx="8" cy="8" r="7" fill="#40b6e0" fill-opacity=".6"/><g opacity=".75"><text x="7.8" y="11" font-family="Liberation Sans,sans-serif" font-size="8.1" text-anchor="middle" fill="#231f20" stroke="#231f20" stroke-width=".3">C</text></g><circle cx="13" cy="13" r="3.9" fill="#fff"/><circle cx="13" cy="13" r="3" fill="#62b543"/></svg>
<div class="tr" style="left:156px;top:1266px">DBContentProvider</div>
<svg style="position:absolute;left:79.4px;top:1311.3px" width="24" height="24" viewBox="-12 -12 24 24"><path d="M-3.9,-8.4 L4.5,0 L-3.9,8.4" fill="none" stroke="#acacac" stroke-width="2"/></svg>
<svg style="position:absolute;left:116px;top:1306px" width="32" height="32" viewBox="0 0 16 16" ><circle cx="8" cy="8" r="7" fill="#40b6e0" fill-opacity=".6"/><g opacity=".75"><text x="7.8" y="11" font-family="Liberation Sans,sans-serif" font-size="8.1" text-anchor="middle" fill="#231f20" stroke="#231f20" stroke-width=".3">C</text></g><circle cx="13" cy="13" r="3.9" fill="#fff"/><circle cx="13" cy="13" r="3" fill="#62b543"/></svg>
<div class="tr" style="left:156px;top:1304px">DBParser</div>
<svg style="position:absolute;left:79.4px;top:1349.3px" width="24" height="24" viewBox="-12 -12 24 24"><path d="M-3.9,-8.4 L4.5,0 L-3.9,8.4" fill="none" stroke="#acacac" stroke-width="2"/></svg>
<svg style="position:absolute;left:116px;top:1344px" width="32" height="32" viewBox="0 0 16 16" ><circle cx="8" cy="8" r="7" fill="#40b6e0" fill-opacity=".6"/><g opacity=".75"><text x="7.8" y="11" font-family="Liberation Sans,sans-serif" font-size="8.1" text-anchor="middle" fill="#231f20" stroke="#231f20" stroke-width=".3">C</text></g><circle cx="13" cy="13" r="3.9" fill="#fff"/><circle cx="13" cy="13" r="3" fill="#62b543"/></svg>
<div class="tr" style="left:156px;top:1342px">FileBackupProvider</div>
<svg style="position:absolute;left:79.4px;top:1387.3px" width="24" height="24" viewBox="-12 -12 24 24"><path d="M-3.9,-8.4 L4.5,0 L-3.9,8.4" fill="none" stroke="#acacac" stroke-width="2"/></svg>
<svg style="position:absolute;left:116px;top:1382px" width="32" height="32" viewBox="0 0 16 16" ><circle cx="8" cy="8" r="7" fill="#40b6e0" fill-opacity=".6"/><g opacity=".75"><text x="7.8" y="11" font-family="Liberation Sans,sans-serif" font-size="8.1" text-anchor="middle" fill="#231f20" stroke="#231f20" stroke-width=".3">C</text></g><circle cx="13" cy="13" r="3.9" fill="#fff"/><circle cx="13" cy="13" r="3" fill="#62b543"/></svg>
<div class="tr" style="left:156px;top:1380px">FileSelectActivity</div>
<svg style="position:absolute;left:79.4px;top:1425.3px" width="24" height="24" viewBox="-12 -12 24 24"><path d="M-3.9,-8.4 L4.5,0 L-3.9,8.4" fill="none" stroke="#acacac" stroke-width="2"/></svg>
<svg style="position:absolute;left:116px;top:1420px" width="32" height="32" viewBox="0 0 16 16" ><circle cx="8" cy="8" r="7" fill="#40b6e0" fill-opacity=".6"/><g opacity=".75"><text x="7.8" y="11" font-family="Liberation Sans,sans-serif" font-size="8.1" text-anchor="middle" fill="#231f20" stroke="#231f20" stroke-width=".3">C</text></g><circle cx="13" cy="13" r="3.9" fill="#fff"/><circle cx="13" cy="13" r="3" fill="#62b543"/></svg>
<div class="tr" style="left:156px;top:1418px">MainLoginActivity</div>
<svg style="position:absolute;left:79.4px;top:1463.3px" width="24" height="24" viewBox="-12 -12 24 24"><path d="M-3.9,-8.4 L4.5,0 L-3.9,8.4" fill="none" stroke="#acacac" stroke-width="2"/></svg>
<svg style="position:absolute;left:116px;top:1458px" width="32" height="32" viewBox="0 0 16 16" ><circle cx="8" cy="8" r="7" fill="#40b6e0" fill-opacity=".6"/><g opacity=".75"><text x="7.8" y="11" font-family="Liberation Sans,sans-serif" font-size="8.1" text-anchor="middle" fill="#231f20" stroke="#231f20" stroke-width=".3">C</text></g><circle cx="13" cy="13" r="3.9" fill="#fff"/><circle cx="13" cy="13" r="3" fill="#62b543"/></svg>
<div class="tr" style="left:156px;top:1456px">Manifest</div>
<svg style="position:absolute;left:79.4px;top:1501.3px" width="24" height="24" viewBox="-12 -12 24 24"><path d="M-3.9,-8.4 L4.5,0 L-3.9,8.4" fill="none" stroke="#acacac" stroke-width="2"/></svg>
<svg style="position:absolute;left:116px;top:1496px" width="32" height="32" viewBox="0 0 16 16" ><circle cx="8" cy="8" r="7" fill="#40b6e0" fill-opacity=".6"/><g opacity=".75"><text x="7.8" y="11" font-family="Liberation Sans,sans-serif" font-size="8.1" text-anchor="middle" fill="#231f20" stroke="#231f20" stroke-width=".3">C</text></g><circle cx="13" cy="13" r="3.9" fill="#fff"/><circle cx="13" cy="13" r="3" fill="#62b543"/></svg>
<div class="tr" style="left:156px;top:1494px">NetBackupHandler</div>
<svg style="position:absolute;left:79.4px;top:1539.3px" width="24" height="24" viewBox="-12 -12 24 24"><path d="M-3.9,-8.4 L4.5,0 L-3.9,8.4" fill="none" stroke="#acacac" stroke-width="2"/></svg>
<svg style="position:absolute;left:116px;top:1534px" width="32" height="32" viewBox="0 0 16 16" ><circle cx="8" cy="8" r="7" fill="#40b6e0" fill-opacity=".6"/><g opacity=".75"><text x="7.8" y="11" font-family="Liberation Sans,sans-serif" font-size="8.1" text-anchor="middle" fill="#231f20" stroke="#231f20" stroke-width=".3">C</text></g><circle cx="13" cy="13" r="3.9" fill="#fff"/><circle cx="13" cy="13" r="3" fill="#62b543"/></svg>
<div class="tr" style="left:156px;top:1532px">PasswordEntry</div>
<svg style="position:absolute;left:79.4px;top:1577.3px" width="24" height="24" viewBox="-12 -12 24 24"><path d="M-3.9,-8.4 L4.5,0 L-3.9,8.4" fill="none" stroke="#acacac" stroke-width="2"/></svg>
<svg style="position:absolute;left:116px;top:1572px" width="32" height="32" viewBox="0 0 16 16" ><circle cx="8" cy="8" r="7" fill="#40b6e0" fill-opacity=".6"/><g opacity=".75"><text x="7.8" y="11" font-family="Liberation Sans,sans-serif" font-size="8.1" text-anchor="middle" fill="#231f20" stroke="#231f20" stroke-width=".3">C</text></g><circle cx="13" cy="13" r="3.9" fill="#fff"/><circle cx="13" cy="13" r="3" fill="#62b543"/></svg>
<div class="tr" style="left:156px;top:1570px">PINActivity</div>
<svg style="position:absolute;left:79.4px;top:1615.3px" width="24" height="24" viewBox="-12 -12 24 24"><path d="M-3.9,-8.4 L4.5,0 L-3.9,8.4" fill="none" stroke="#acacac" stroke-width="2"/></svg>
<svg style="position:absolute;left:116px;top:1610px" width="32" height="32" viewBox="0 0 16 16" ><circle cx="8" cy="8" r="7" fill="#40b6e0" fill-opacity=".6"/><g opacity=".75"><text x="7.8" y="11" font-family="Liberation Sans,sans-serif" font-size="8.1" text-anchor="middle" fill="#231f20" stroke="#231f20" stroke-width=".3">C</text></g><circle cx="13" cy="13" r="3.9" fill="#fff"/><circle cx="13" cy="13" r="3" fill="#62b543"/></svg>
<div class="tr" style="left:156px;top:1608px">PWDBHelper</div>
<svg style="position:absolute;left:79.4px;top:1653.3px" width="24" height="24" viewBox="-12 -12 24 24"><path d="M-3.9,-8.4 L4.5,0 L-3.9,8.4" fill="none" stroke="#acacac" stroke-width="2"/></svg>
<svg style="position:absolute;left:116px;top:1648px" width="32" height="32" viewBox="0 0 16 16" ><circle cx="8" cy="8" r="7" fill="#40b6e0" fill-opacity=".6"/><g opacity=".75"><text x="7.8" y="11" font-family="Liberation Sans,sans-serif" font-size="8.1" text-anchor="middle" fill="#231f20" stroke="#231f20" stroke-width=".3">C</text></g><circle cx="13" cy="13" r="3.9" fill="#fff"/><circle cx="13" cy="13" r="3" fill="#62b543"/></svg>
<div class="tr" style="left:156px;top:1646px">PWList</div>
<svg style="position:absolute;left:79.4px;top:1691.3px" width="24" height="24" viewBox="-12 -12 24 24"><path d="M-3.9,-8.4 L4.5,0 L-3.9,8.4" fill="none" stroke="#acacac" stroke-width="2"/></svg>
<svg style="position:absolute;left:116px;top:1686px" width="32" height="32" viewBox="0 0 16 16" ><circle cx="8" cy="8" r="7" fill="#40b6e0" fill-opacity=".6"/><g opacity=".75"><text x="7.8" y="11" font-family="Liberation Sans,sans-serif" font-size="8.1" text-anchor="middle" fill="#231f20" stroke="#231f20" stroke-width=".3">C</text></g><circle cx="13" cy="13" r="3.9" fill="#fff"/><circle cx="13" cy="13" r="3" fill="#62b543"/></svg>
<div class="tr" style="left:156px;top:1684px">PWTable</div>
<svg style="position:absolute;left:79.4px;top:1729.3px" width="24" height="24" viewBox="-12 -12 24 24"><path d="M-3.9,-8.4 L4.5,0 L-3.9,8.4" fill="none" stroke="#acacac" stroke-width="2"/></svg>
<svg style="position:absolute;left:116px;top:1724px" width="32" height="32" viewBox="0 0 16 16" ><circle cx="8" cy="8" r="7" fill="#40b6e0" fill-opacity=".6"/><g opacity=".75"><text x="7.8" y="11" font-family="Liberation Sans,sans-serif" font-size="8.1" text-anchor="middle" fill="#231f20" stroke="#231f20" stroke-width=".3">C</text></g><circle cx="13" cy="13" r="3.9" fill="#fff"/><circle cx="13" cy="13" r="3" fill="#62b543"/></svg>
<div class="tr" style="left:156px;top:1722px">SettingsActivity</div>
<svg style="position:absolute;left:79.4px;top:1767.3px" width="24" height="24" viewBox="-12 -12 24 24"><path d="M-3.9,-8.4 L4.5,0 L-3.9,8.4" fill="none" stroke="#acacac" stroke-width="2"/></svg>
<svg style="position:absolute;left:116px;top:1762px" width="32" height="32" viewBox="0 0 16 16" ><circle cx="8" cy="8" r="7" fill="#40b6e0" fill-opacity=".6"/><g opacity=".75"><text x="7.8" y="11" font-family="Liberation Sans,sans-serif" font-size="8.1" text-anchor="middle" fill="#231f20" stroke="#231f20" stroke-width=".3">C</text></g><circle cx="13" cy="13" r="3.9" fill="#fff"/><circle cx="13" cy="13" r="3" fill="#62b543"/></svg>
<div class="tr" style="left:156px;top:1760px">ShortLoginActivity</div>
<svg style="position:absolute;left:79.4px;top:1805.3px" width="24" height="24" viewBox="-12 -12 24 24"><path d="M-3.9,-8.4 L4.5,0 L-3.9,8.4" fill="none" stroke="#acacac" stroke-width="2"/></svg>
<svg style="position:absolute;left:116px;top:1800px" width="32" height="32" viewBox="0 0 16 16" ><circle cx="8" cy="8" r="7" fill="#40b6e0" fill-opacity=".6"/><g opacity=".75"><text x="7.8" y="11" font-family="Liberation Sans,sans-serif" font-size="8.1" text-anchor="middle" fill="#231f20" stroke="#231f20" stroke-width=".3">C</text></g><circle cx="13" cy="13" r="3.9" fill="#fff"/><circle cx="13" cy="13" r="3" fill="#62b543"/></svg>
<div class="tr" style="left:156px;top:1798px">WelcomeActivity</div>
<svg style="position:absolute;left:7.399999999999999px;top:1843.3px" width="24" height="24" viewBox="-12 -12 24 24"><path d="M-3.9,-8.4 L4.5,0 L-3.9,8.4" fill="none" stroke="#acacac" stroke-width="2"/></svg>
<svg style="position:absolute;left:44px;top:1838px" width="32" height="32" viewBox="0 0 16 16" ><path d="M1,2 L6,2 L8,4 L15,4 L15,8 L9,8 L9,13 L1,13 Z" fill="#9aa7b0" fill-opacity=".85"/><path d="M10,9h6v1h-6z M10,11h6v1h-6z M10,13h6v1h-6z M10,15h6v1h-6z" fill="#d9a343"/></svg>
<div class="tr cj" style="left:84px;top:1836px">资源文件</div>
<svg style="position:absolute;left:44px;top:1876px" width="32" height="32" viewBox="0 0 16 16" ><path d="M7,1 L3,5 L7,5 Z" fill="#9aa7b0" fill-opacity=".8"/><path d="M8,1 H13 V4.2 A4,4 0 0 0 9.2,9 H9 V15 H3 V6 H8 Z M5.3,8 V13.2 H8.4 V8 Z" fill="#9aa7b0" fill-opacity=".8" fill-rule="evenodd"/><path d="M5.8,9.5h2.6v1h-2.6z M5.8,11.4h2.6v1h-2.6z" fill="#9aa7b0" fill-opacity=".8"/><path d="M13,5 A3,3 0 1 0 13,11 A3,3 0 1 0 13,5 Z M13,6.9 A1.1,1.1 0 1 1 13,9.1 A1.1,1.1 0 1 1 13,6.9 Z M12,10.5 H14 V16 H12 Z M10,13.2 H12 V15 H10 Z" fill="#40b6e0" fill-rule="evenodd"/></svg>
<div class="tr" style="left:84px;top:1874px">APK signature</div>
<svg style="position:absolute;left:44px;top:1914px" width="32" height="32" viewBox="0 0 16 16" ><path d="M1,1 H15 V15 H1 Z M2.9,2.9 V13.1 H13.1 V2.9 Z" fill="#6e6e6e" fill-rule="evenodd"/><path d="M4,9 H6.5 V5.5 H8.2 V8.4 H10.1 V5.5 H11.9 V11 H4 Z" fill="#6e6e6e"/></svg>
<div class="tr" style="left:84px;top:1912px">Summary</div>
<div class="dot" style="left:1344px;top:1118px"></div><div class="dot" style="left:1344px;top:1128px"></div><div class="dot" style="left:1344px;top:1138px"></div>
<svg style="position:absolute;left:1376px;top:176px" width="32" height="32" viewBox="0 0 16 16" ><circle cx="8" cy="8" r="7" fill="#40b6e0" fill-opacity=".6"/><g opacity=".75"><text x="7.8" y="11" font-family="Liberation Sans,sans-serif" font-size="8.1" text-anchor="middle" fill="#231f20" stroke="#231f20" stroke-width=".3">C</text></g><circle cx="13" cy="13" r="3.9" fill="#f2f2f2"/><circle cx="13" cy="13" r="3" fill="#62b543"/></svg>
<div id="tabtext">CryptoService</div>
<svg style="position:absolute;left:1624px;top:182px" width="20" height="20" viewBox="0 0 20 20"><path d="M2.8,3 L17.2,17.4 M17.2,3 L2.8,17.4" stroke="#b0b8bd" stroke-width="2" fill="none"/></svg>
<div id="tabline"></div>
<div id="editor">
<div id="hl"></div>
<div id="gline"></div>
<pre id="gut">















<u>28</u>
















40
41



45
46
47
48
49



54
55



60
61

63
68

65
68

</pre>
<pre id="code">
<b>package</b> com.mwr.example.sieve;

<b>import</b> android.app.Service;
<b>import</b> android.content.Intent;
<b>import</b> android.os.Bundle;
<b>import</b> android.os.Handler;
<b>import</b> android.os.HandlerThread;
<b>import</b> android.os.IBinder;
<b>import</b> android.os.Looper;
<b>import</b> android.os.Message;
<b>import</b> android.os.Messenger;
<b>import</b> android.os.RemoteException;
<b>import</b> android.util.Log;

<em>/* loaded from: classes.dex */</em>
<b>public</b> <b>class</b> <mark>CryptoService</mark> <b>extends</b> Service <i class="p">{</i>
    <b>public</b> <b>static</b> <b>final</b> <i class="f">String</i> KEY <i class="o">=</i> <i class="s">"com.mwr.example.sieve.KEY"</i>;
    <b>public</b> <b>static</b> <b>final</b> <b class="d">int</b> MSG_DECRYPT <i class="o">=</i> <i class="n">13476</i>;
    <b>public</b> <b>static</b> <b>final</b> <b class="d">int</b> MSG_ENCRYPT <i class="o">=</i> <i class="n">3452</i>;
    <b>public</b> <b>static</b> <b>final</b> <i class="f">String</i> PASSWORD <i class="o">=</i> <i class="s">"com.mwr.example.sieve.PASSWORD"</i>;
    <b>public</b> <b>static</b> <b>final</b> <i class="f">String</i> RESULT <i class="o">=</i> <i class="s">"com.mwr.example.sieve.RESULT"</i>;
    <b>public</b> <b>static</b> <b>final</b> <i class="f">String</i> STRING <i class="o">=</i> <i class="s">"com.mwr.example.sieve.STRING"</i>;
    <b>private</b> <b>static</b> <b>final</b> <i class="f">String</i> TAG <i class="o">=</i> <i class="s">"m_</i><mark><i class="s">CryptoService</i></mark><i class="s">"</i>;
    <b>private</b> Messenger responseHandler;
    <b>private</b> Messenger serviceHandler;
    <b>private</b> Looper serviceLooper;

    <b>private</b> <b>native</b> <i class="f">String</i> runNDKdecrypt<i class="p">(</i><i class="f">String</i> str, <b class="d">byte</b><i class="p">[]</i> bArr<i class="p">)</i>;

    <b>private</b> <b>native</b> <b class="d">byte</b><i class="p">[]</i> runNDKencrypt<i class="p">(</i><i class="f">String</i> str, <i class="f">String</i> str2<i class="p">)</i>;

    <b>static</b> <i class="p">{</i>
        <i class="f">System</i>.loadLibrary<i class="p">(</i><i class="s">"encrypt"</i><i class="p">)</i>;
        <i class="f">System</i>.loadLibrary<i class="p">(</i><i class="s">"decrypt"</i><i class="p">)</i>;
    <i class="p">}</i>

    <i class="a">@Override</i> <em>// android.app.Service</em>
    <b>public</b> <b>void</b> onCreate<i class="p">()</i> <i class="p">{</i>
        HandlerThread thread <i class="o">=</i> <b>new</b> HandlerThread<i class="p">(</i>TAG, <i class="n">10</i><i class="p">)</i>;
        thread.start<i class="p">()</i>;
        <b>this</b>.serviceLooper <i class="o">=</i> thread.getLooper<i class="p">()</i>;
        <b>this</b>.serviceHandler <i class="o">=</i> <b>new</b> Messenger<i class="p">(</i><b>new</b> MessageHandler<i class="p">(</i><b>this</b>.serviceLooper<i class="p">))</i>;
    <i class="p">}</i>

    <i class="a">@Override</i> <em>// android.app.Service</em>
    <b>public</b> IBinder onBind<i class="p">(</i>Intent arg0<i class="p">)</i> <i class="p">{</i>
        <b>return</b> <b>this</b>.serviceHandler.getBinder<i class="p">()</i>;
    <i class="p">}</i>

    <em>/* JADX INFO: Access modifiers changed from: private */</em>
    <b>public</b> <b class="d">byte</b><i class="p">[]</i> encrypt<i class="p">(</i><i class="f">String</i> key, <i class="f">String</i> string<i class="p">)</i> <i class="p">{</i>
        <b class="d">byte</b><i class="p">[]</i> out <i class="o">=</i> <b>null</b>;
        <b>try</b> <i class="p">{</i>
            <b class="d">byte</b><i class="p">[]</i> out2 <i class="o">=</i> runNDKencrypt<i class="p">(</i>key, string<i class="p">)</i>;
            <b>return</b> out2;
        <i class="p">}</i> <b>catch</b> <i class="p">(</i><i class="f">Exception</i> e<i class="p">)</i> <i class="p">{</i>
            Log.e<i class="p">(</i>TAG, <i class="s">"ERROR: Error during encrytion: "</i> <i class="o">+</i> e.getMessage<i class="p">())</i>;
            <b>return</b> out;
        <i class="p">}</i>
    <i class="p">}</i></pre>
<div id="caret"></div>
<div id="wm">initsec blog.gm7.org</div>
<div id="sbtrack"></div><div id="sbthumb"></div>
</div>
<div id="tabul"></div>
<div id="btline"></div><div id="btul"></div>
<div class="bt" style="left:1376px;top:2047.5px">代码</div><div class="bt" style="left:1475px;top:2047px">Smali</div><div class="bt" style="left:1587.5px;top:2047px">Simple</div><div class="bt" style="left:1716px;top:2047px">Fallback</div>
<div id="cb"></div><div class="bt" style="left:1980px;top:2044px;letter-spacing:.3px">Split view</div>
<div class="dot" style="left:1908px;top:2102px"></div><div class="dot" style="left:1918px;top:2102px"></div><div class="dot" style="left:1928px;top:2102px"></div>
</div>
</body></html>
